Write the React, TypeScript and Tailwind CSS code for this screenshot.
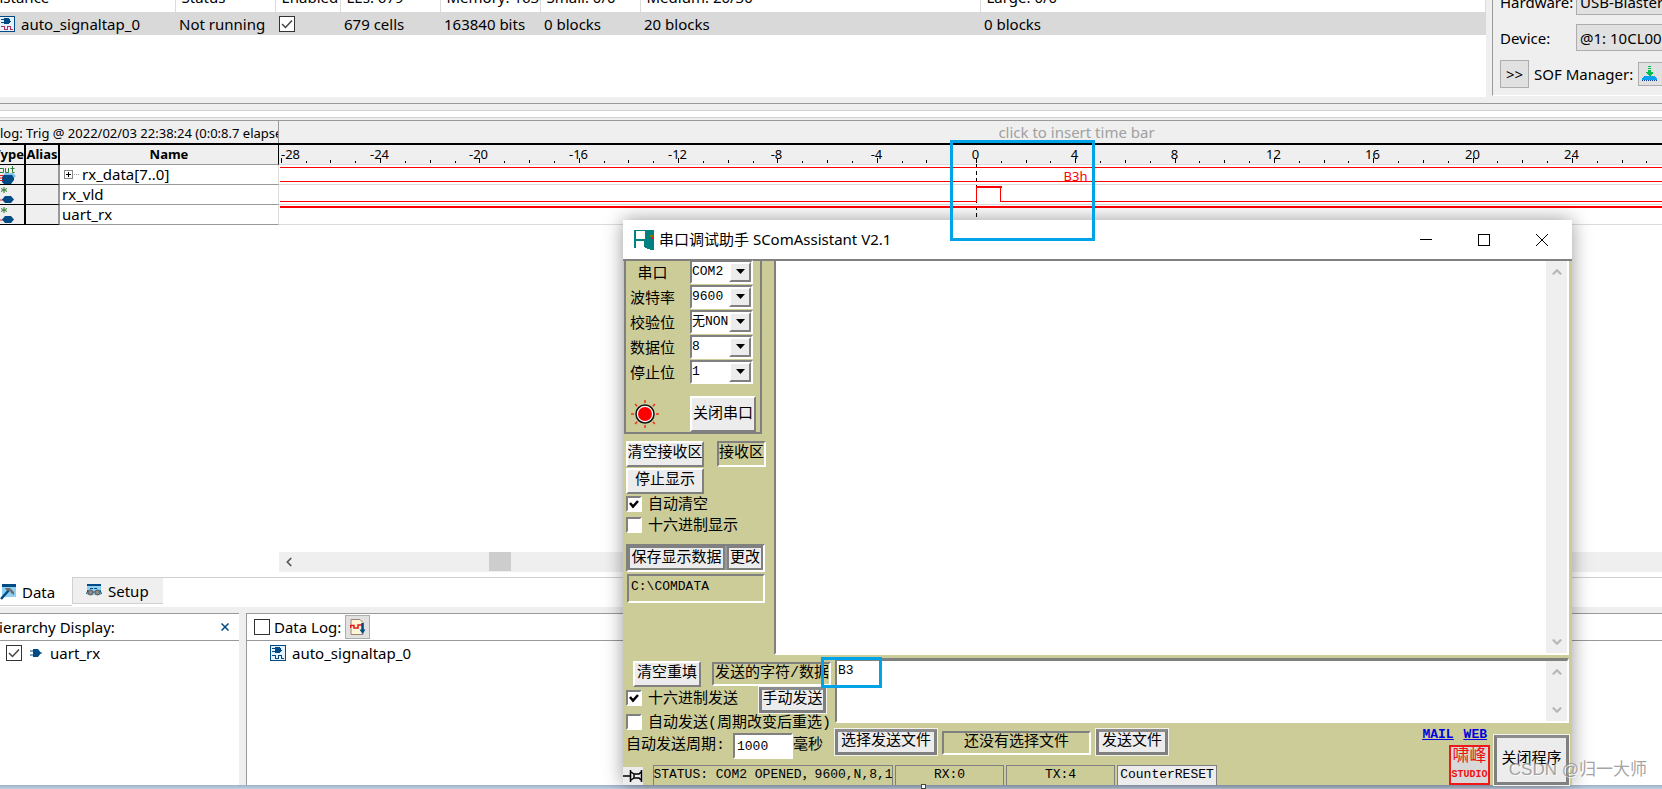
import type { ReactNode } from "react";
import { ChevronDown, ChevronLeft, ChevronUp } from "lucide-react";

const UI_FONT = "font-['Noto_Sans','Noto_Sans_CJK_SC',sans-serif]";
const SONG_FONT = "font-['Liberation_Mono','Noto_Sans_CJK_SC',monospace]";

const RAISED =
  "border-2 border-t-white border-l-white border-r-[#808080] border-b-[#808080] bg-[#ececec]";
const SUNKEN =
  "border-2 border-t-[#808080] border-l-[#808080] border-r-white border-b-white";
const FRAMED =
  "border-[3px] border-[#808080] border-t-[#8c8c8c] bg-[#ececec] outline outline-1 outline-[#f4f4ec]";

function SignalTapIcon({ wave = "#004a86" }: { wave?: string }) {
  return (
    <svg className="size-4 shrink-0" viewBox="0 0 16 16" shapeRendering="crispEdges" aria-hidden="true">
      <rect x="0.5" y="0.5" width="15" height="15" fill="#e6f1fa" stroke="#004a86" />
      <path d="M5 2h4l2 2v2l-2 2H5z" fill="#004a86" />
      <path d="M2 3.500h3M2 6.500h3M10 5h2" stroke="#004a86" />
      <path d="M2 10.500h3v3h3v-3h3v3h3" fill="none" stroke={wave} />
    </svg>
  );
}

function BusIcon() {
  return (
    <svg className="block h-[18px] w-4" viewBox="0 0 16 18" aria-hidden="true">
      <g fill="none" stroke="#2f7d32" strokeWidth="1">
        <path d="M0 2.500h3.500v4H0M5.500 2v4.500h3V2M12.500 0v6.500h2M10.500 2.500h4" />
      </g>
      <path d="M3 9l2-2h8l3 3-3 3z" fill="#7cc4ee" />
      <path d="M2 11l2-2h8l2 3v2l-3 4H4l-2-2z" fill="#004a86" />
      <path d="M0 9.500h4M0 12h3M0 14.500h3" stroke="#e02020" />
    </svg>
  );
}

function PinIcon() {
  return (
    <svg className="block h-[18px] w-4" viewBox="0 0 16 18" aria-hidden="true">
      <path d="M4 1v6M1 2.500l6 3M7 2.500L1 5.500" stroke="#2f7d32" strokeWidth="1" />
      <path d="M0 14h3" stroke="#e02020" />
      <path d="M5 10h6l3 3.500-3 3.500H5l-3-3.500z" fill="#004a86" />
    </svg>
  );
}

function HammerIcon() {
  return (
    <svg className="h-4 w-4" viewBox="0 0 16 16" aria-hidden="true">
      <rect x="2" y="1" width="14" height="12" fill="#8ecff2" />
      <rect x="2" y="0" width="14" height="3" fill="#004a86" />
      <path d="M1 15L9 6" stroke="#004a86" strokeWidth="2.500" />
      <path d="M5 4h5l4 4v3l-3-2-1-2-4-1z" fill="#6e6e6e" />
    </svg>
  );
}

function BinocularsIcon() {
  return (
    <svg className="h-4 w-4" viewBox="0 0 16 16" aria-hidden="true">
      <rect x="1" y="1" width="14" height="11" fill="#8ecff2" />
      <rect x="1" y="1" width="14" height="2" fill="#004a86" />
      <path d="M4 5.500h3M8 5.500h3" stroke="#004a86" />
      <path d="M0.500 11l1.500-4M15.500 11L14 7" stroke="#004a86" />
      <circle cx="4.500" cy="9.500" r="2.500" fill="#8a8a8a" stroke="#555" />
      <circle cx="11.500" cy="9.500" r="2.500" fill="#8a8a8a" stroke="#555" />
      <path d="M7 9h2" stroke="#555" />
    </svg>
  );
}

function DataLogIcon() {
  return (
    <svg className="h-[18px] w-4" viewBox="0 0 16 18" aria-hidden="true">
      <path d="M1 1.500h9l3 3v12H1z" fill="#fdf6d8" stroke="#9c8270" />
      <path d="M0.500 10V7.500H4V10h4V7h4" fill="none" stroke="#e81818" strokeWidth="1.500" />
      <path d="M12.500 5v8" stroke="#004a86" strokeWidth="2.500" />
      <path d="M9.500 11.500h6L12.500 16z" fill="#004a86" />
    </svg>
  );
}

function DownloadIcon() {
  return (
    <svg className="h-4 w-4" viewBox="0 0 16 16" shapeRendering="crispEdges" aria-hidden="true">
      <path d="M6 0h3v1H6zM6 2h3v1H6zM6 4h3v2h2v1L8 10 4 7V6h2z" fill="#00c050" />
      <path d="M3 10h9l3 2v2H0v-2z" fill="#0aa0f0" />
      <path d="M0 14.500h15" stroke="#123a8c" strokeWidth="1" strokeDasharray="1 1" />
    </svg>
  );
}

function ComAppIcon() {
  return (
    <svg className="h-5 w-5" viewBox="0 0 20 20" shapeRendering="crispEdges" aria-hidden="true">
      <path d="M0 0h20v20h-3l-7-3v-6H2v7H0z" fill="#008080" />
      <path d="M2 1h9v8H2z" fill="#fff" />
      <rect x="16" y="5" width="3" height="2" fill="#808000" />
      <rect x="17" y="7" width="2" height="2" fill="#e81010" />
    </svg>
  );
}

function LampIcon() {
  const rays = [0, 45, 90, 135, 180, 225, 270, 315];
  return (
    <svg className="h-[30px] w-[30px]" viewBox="0 0 30 30" role="img" aria-label="端口已打开">
      {rays.map((angle) => (
        <path key={angle} d="M15 1v3" stroke="#f03020" strokeWidth="1.500" transform={`rotate(${angle} 15 15)`} />
      ))}
      <circle cx="15" cy="15" r="9" fill="#fff" stroke="#111" strokeWidth="1.500" />
      <circle cx="15" cy="15" r="7" fill="#f00" />
    </svg>
  );
}

/* ---------- logic analyser ---------- */

const columns = [
  { head: "Instance", cell: "auto_signaltap_0", width: "w-[192px]" },
  { head: "Status", cell: "Not running", width: "w-[100px]" },
  { head: "Enabled", cell: "", width: "w-[65px]" },
  { head: "LEs: 679", cell: "679 cells", width: "w-[100px]" },
  { head: "Memory: 163840", cell: "163840 bits", width: "w-[100px]" },
  { head: "Small: 0/0", cell: "0 blocks", width: "w-[100px]" },
  { head: "Medium: 20/30", cell: "20 blocks", width: "w-[340px]" },
  { head: "Large: 0/0", cell: "0 blocks", width: "w-auto" },
];

function InstanceTable() {
  return (
    <div className="min-w-0 flex-1 overflow-hidden bg-white">
      <div className="-ml-[17px]">
        <table className="-mt-3 w-full table-fixed border-collapse text-[15px] leading-5">
          <thead>
            <tr className="h-6">
              {columns.map((c) => (
                <th
                  key={c.head}
                  className={`${c.width} overflow-hidden border-r border-[#dcdcdc] p-0 pb-[6px] pl-[6px] text-left align-bottom leading-[18px] font-normal whitespace-nowrap`}
                >
                  {c.head}
                </th>
              ))}
            </tr>
          </thead>
          <tbody>
            <tr className="h-[23px] bg-[#d9d9d9]">
              {columns.map((c, i) => (
                <td key={c.head} className="p-0 pl-1 whitespace-nowrap">
                  {i === 0 && (
                    <span className="flex items-center gap-[6px] pl-3">
                      <SignalTapIcon wave="#b03060" />
                      {c.cell}
                    </span>
                  )}
                  {i === 2 && <Tick label="Enabled" checked />}
                  {i !== 0 && i !== 2 && c.cell}
                </td>
              ))}
            </tr>
          </tbody>
        </table>
      </div>
    </div>
  );
}

function Tick({ label, checked = false }: { label: string; checked?: boolean }) {
  return (
    <span className="grid size-4 place-items-center">
      <input
        type="checkbox"
        aria-label={label}
        defaultChecked={checked}
        className="peer col-start-1 row-start-1 size-4 appearance-none border border-[#333] bg-white"
      />
      <svg
        className="pointer-events-none col-start-1 row-start-1 hidden size-3 peer-checked:block"
        viewBox="0 0 12 12"
        aria-hidden="true"
      >
        <path d="M1 6l3.500 3.500L11 2.500" fill="none" stroke="#444" strokeWidth="1.500" />
      </svg>
    </span>
  );
}

function HardwarePanel() {
  const box = "border border-[#adadad] bg-[#e1e1e1]";
  return (
    <div className="flex h-[97px] w-[176px] shrink-0 overflow-hidden bg-[#efefef] pl-[6px] text-[15px] leading-5">
      <div className="mb-px w-full border-b border-l border-b-white border-l-[#999] pl-[7px]">
        <div className="-mt-3 grid grid-cols-[76px_120px] items-center gap-y-[9px]">
          <label htmlFor="hardware">Hardware:</label>
          <select id="hardware" className={`${box} h-[27px] appearance-none px-[3px]`}>
            <option>USB-Blaster [USB-0]</option>
          </select>
          <label htmlFor="device">Device:</label>
          <select id="device" className={`${box} h-[27px] appearance-none px-[3px]`}>
            <option>@1: 10CL006Y</option>
          </select>
        </div>
        <div className="mt-[9px] flex items-center gap-[5px] whitespace-nowrap">
          <button type="button" className={`${box} h-7 w-[29px] shrink-0`}>
            &gt;&gt;
          </button>
          <span>SOF Manager:</span>
          <button type="button" aria-label="Program device" className={`${box} h-6 w-10 shrink-0 pl-[3px]`}>
            <DownloadIcon />
          </button>
        </div>
      </div>
    </div>
  );
}

const ORIGIN = 697;
const STEP = 24.83;
const xAt = (t: number) => Math.round(ORIGIN + t * STEP) + 0.5;

function Waveform() {
  const ticks = Array.from({ length: 58 }, (_, i) => i - 28);
  const pulse = `M1 56.500H${xAt(0)}V41.500H${xAt(1) - 1}V56.500H1600`;
  return (
    <div className="min-w-0 flex-1 overflow-hidden">
      <svg className="block h-20 w-full" shapeRendering="crispEdges" role="img" aria-label="Captured waveform">
        <rect width="100%" height="19" fill="#efefef" />
        {[19, 39, 59, 79].map((y) => (
          <rect key={y} y={y} width="100%" height="1" fill="#dcdcdc" />
        ))}
        {ticks.map((t) => (
          <path
            key={t}
            d={`M${xAt(t)} ${t % 4 === 0 ? 13 : t % 2 === 0 ? 15 : 16}V18`}
            stroke="#000"
          />
        ))}
        <g fontSize="13" fontFamily="Noto Sans, sans-serif">
          {ticks
            .filter((t) => t % 4 === 0)
            .map((t) => (
              <text key={t} x={t === -28 ? 2 : xAt(t) - 1} y="14" textAnchor={t === -28 ? "start" : "middle"}>
                {t}
              </text>
            ))}
          <text x={xAt(4) + 12} y="36" textAnchor="end" fill="#f00">
            B3h
          </text>
        </g>
        <path d={`M${xAt(0)} 19V76`} stroke="#000" strokeDasharray="4 3" />
        <g fill="none" stroke="#f00">
          <path d="M1 22.500H1600M1 36.500H1600" />
          <path d={pulse} />
          <path d={`M${xAt(0)} 42H${xAt(1)}`} strokeWidth="2" />
          <path d="M1 62H1600" strokeWidth="2" />
        </g>
      </svg>
    </div>
  );
}

const signals = [
  { name: "rx_data[7..0]", bus: true },
  { name: "rx_vld", bus: false },
  { name: "uart_rx", bus: false },
];

function SignalTable() {
  return (
    <table className="w-[279px] shrink-0 table-fixed border-separate border-spacing-0 text-[15px] leading-[19px]">
      <thead>
        <tr className="h-5 bg-[#efefef] text-[13px]">
          <th className="w-[26px] overflow-hidden border-r-2 border-b border-black p-0">
            <span className="-ml-3 block text-right">Type</span>
          </th>
          <th className="w-[34px] border-r-2 border-b border-black p-0">Alias</th>
          <th className="border-r border-b border-r-black border-b-[#999] p-0">Name</th>
        </tr>
      </thead>
      <tbody>
        {signals.map((s) => (
          <tr key={s.name} className="h-5">
            <td className="border-r-2 border-b border-black bg-[#efefef] p-0">
              {s.bus ? <BusIcon /> : <PinIcon />}
            </td>
            <td className="border-r-2 border-b border-r-[#999] border-b-black bg-[#efefef] p-0" />
            <td className="border-r border-b border-r-[#dcdcdc] border-b-[#999] p-0 pl-[2px]">
              <span className="flex items-center whitespace-nowrap">
                {s.bus && (
                  <svg className="mr-[3px] ml-[2px] h-[9px] w-[15px]" viewBox="0 0 15 9" shapeRendering="crispEdges" aria-hidden="true">
                    <rect x="0.500" y="0.500" width="8" height="8" fill="#fff" stroke="#888" />
                    <path d="M2 4.500h5M4.500 2v5" stroke="#000" />
                    <path d="M10 4.500h5" stroke="#999" strokeDasharray="1 1" />
                  </svg>
                )}
                {s.name}
              </span>
            </td>
          </tr>
        ))}
      </tbody>
    </table>
  );
}

function BottomPanels() {
  return (
    <>
      <div className="mt-[5px] flex h-[30px] items-start bg-white text-[15px] leading-5">
        <button type="button" className="flex h-[29px] w-[72px] items-center gap-[6px] border-b border-[#d0d0d0] pt-[2px]">
          <HammerIcon />
          Data
        </button>
        <div className="flex-1 border-t border-l border-[#d0d0d0]">
          <button type="button" className="flex h-[26px] w-[90px] items-center gap-[6px] border-b border-[#d0d0d0] bg-[#efefef] pl-[13px]">
            <BinocularsIcon />
            Setup
          </button>
        </div>
      </div>
      <div className="flex h-[178px] gap-[7px] bg-[#efefef] pt-[6px] text-[15px] leading-5">
        <section className="w-[239px] shrink-0 border-t border-[#999] bg-white">
          <div className="flex h-[27px] items-center justify-between border-b border-[#999] pr-[10px]">
            <span className="-ml-3">Hierarchy Display:</span>
            <button type="button" aria-label="Close hierarchy" className="p-0">
              <svg className="h-2 w-2" viewBox="0 0 8 8" aria-hidden="true">
                <path d="M0.500 0.500l7 7M7.500 0.500l-7 7" stroke="#004a86" strokeWidth="1.500" />
              </svg>
            </button>
          </div>
          <div className="flex h-6 items-center pl-[6px]">
            <Tick label="uart_rx" checked />
            <svg className="mr-2 ml-2 h-2 w-3" viewBox="0 0 12 8" aria-hidden="true">
              <path d="M3 0h5l3 4-3 4H3z" fill="#004a86" />
              <path d="M0 2h4M0 6h4M10 4h2" stroke="#004a86" />
            </svg>
            uart_rx
          </div>
        </section>
        <section className="flex-1 border-t border-l border-[#999] bg-white">
          <div className="flex h-[27px] items-center gap-1 border-b border-[#999] pl-[7px]">
            <Tick label="Data Log" />
            <span>Data Log:</span>
            <button type="button" aria-label="Save log" className="grid h-6 w-[25px] place-items-center border border-[#adadad] bg-[#e1e1e1]">
              <DataLogIcon />
            </button>
          </div>
          <div className="flex h-6 items-center gap-[6px] pl-[23px]">
            <SignalTapIcon />
            auto_signaltap_0
          </div>
        </section>
      </div>
      <div className="h-1 bg-linear-to-b from-[#9fb0c8] to-[#c3d0e0]" />
    </>
  );
}

/* ---------- serial assistant ---------- */

const ports = [
  { id: "port", label: "串口", value: "COM2" },
  { id: "baud", label: "波特率", value: "9600" },
  { id: "parity", label: "校验位", value: "无NONE" },
  { id: "data", label: "数据位", value: "8" },
  { id: "stop", label: "停止位", value: "1" },
];

function Check({ label, checked = false }: { label: string; checked?: boolean }) {
  return (
    <label className="flex items-start gap-[6px] whitespace-nowrap">
      <span className="grid size-4 place-items-center">
        <input
          type="checkbox"
          defaultChecked={checked}
          className="peer col-start-1 row-start-1 size-4 appearance-none border-2 border-t-[#808080] border-r-white border-b-white border-l-[#808080] bg-white"
        />
        <svg
          className="pointer-events-none col-start-1 row-start-1 hidden size-[10px] peer-checked:block"
          viewBox="0 0 10 10"
          aria-hidden="true"
        >
          <path d="M1 4l3 3.500L9 2" fill="none" stroke="#000" strokeWidth="2.500" />
        </svg>
      </span>
      {label}
    </label>
  );
}

function ScrollRail() {
  return (
    <div className="flex w-[21px] shrink-0 flex-col items-center justify-between bg-[#efefef] py-1 text-[#b8b8b8]" aria-hidden="true">
      <ChevronUp className="size-[14px]" strokeWidth={4} />
      <ChevronDown className="size-[14px]" strokeWidth={4} />
    </div>
  );
}

function Readout({ className, children }: { className: string; children: ReactNode }) {
  return (
    <div className={`${SUNKEN} overflow-hidden whitespace-nowrap ${className}`}>{children}</div>
  );
}

function PortSettings() {
  return (
    <div className="ml-px h-[175px] w-[138px] border-r-2 border-b-2 border-l-2 border-[#808080]">
      {ports.map((p) => (
        <div key={p.id} className="flex h-[25px] items-center justify-between pr-[7px] pl-1">
          <label htmlFor={p.id} className="w-[45px] pt-[6px] text-center">
            {p.label}
          </label>
          <div className={`${SUNKEN} flex h-6 w-[63px] bg-white`}>
            <select id={p.id} className="w-[37px] appearance-none overflow-hidden text-clip bg-white text-[13px] leading-4">
              <option>{p.value}</option>
            </select>
            <span className={`${RAISED} pointer-events-none grid flex-1 place-items-center`}>
              <svg className="h-[5px] w-[9px]" viewBox="0 0 9 5" aria-hidden="true">
                <path d="M0 0h9L4.500 5z" />
              </svg>
            </span>
          </div>
        </div>
      ))}
      <div className="mt-3 flex items-center justify-between pr-1 pl-1">
        <LampIcon />
        <button type="button" className={`${RAISED} h-9 w-[66px] pt-[2px] whitespace-nowrap`}>
          关闭串口
        </button>
      </div>
    </div>
  );
}

function ReceiveControls() {
  return (
    <div className="w-[151px] shrink-0">
      <PortSettings />
      <div className="mt-[7px] flex justify-between pr-2 pl-[3px]">
        <button type="button" className={`${RAISED} flex h-[26px] w-[78px] items-center justify-center overflow-hidden whitespace-nowrap`}>
          清空接收区
        </button>
        <Readout className="flex h-[26px] w-[49px] items-center">接收区</Readout>
      </div>
      <button type="button" className={`${RAISED} mt-px ml-[3px] block h-[26px] w-[78px]`}>
        停止显示
      </button>
      <div className="mt-[2px] flex flex-col gap-px pl-[3px]">
        <Check label="自动清空" checked />
        <Check label="十六进制显示" />
      </div>
      <div className={`${SUNKEN} mt-[7px] ml-[3px] flex h-7 w-[139px] gap-[2px] bg-[#9a9a9a] whitespace-nowrap`}>
        <button type="button" className="flex-1 border-2 border-[#808080] bg-[#ececec] pt-px">
          保存显示数据
        </button>
        <button type="button" className="w-9 border-2 border-[#808080] bg-[#ececec] pt-px">
          更改
        </button>
      </div>
      <Readout className="mt-[2px] ml-1 h-[29px] w-[138px] px-[2px] pt-px text-[13px]">
        C:\COMDATA
      </Readout>
    </div>
  );
}

function SendArea() {
  const status = "flex h-5 items-center justify-center border border-[#808080] border-b-0 text-[13px] whitespace-nowrap";
  return (
    <div className="grid grid-cols-[212px_1fr_auto]">
      <div className="row-span-2 pt-[6px]">
        <div className="flex items-center justify-between pr-1 pl-[10px]">
          <button type="button" className={`${RAISED} h-[26px] w-[68px] whitespace-nowrap`}>
            清空重填
          </button>
          <Readout className="h-6 w-[119px] px-px">
            <label htmlFor="send">发送的字符/数据</label>
          </Readout>
        </div>
        <div className="flex items-center justify-between pr-[9px] pl-[3px]">
          <Check label="十六进制发送" checked />
          <button type="button" className={`${FRAMED} h-[26px] w-[67px] leading-[18px] whitespace-nowrap`}>
            手动发送
          </button>
        </div>
        <div className="pt-px pl-[3px]">
          <Check label="自动发送(周期改变后重选)" />
        </div>
        <div className="flex h-6 items-center pl-[3px] whitespace-nowrap">
          <label htmlFor="period" className="w-[107px]">
            自动发送周期:
          </label>
          <input
            id="period"
            defaultValue="1000"
            className={`${SUNKEN} h-[26px] w-[60px] bg-white px-[2px] text-[13px]`}
          />
          毫秒
        </div>
      </div>

      <div className="col-span-2 mt-[3px] mr-[3px] flex h-[65px] border-2 border-t-[3px] border-t-[#808080] border-r-white border-b-white border-l-[#808080] bg-white">
        <textarea
          id="send"
          defaultValue="B3"
          className="min-w-0 flex-1 resize-none overflow-hidden bg-white px-px pt-[2px] text-[13px] leading-4 outline-none"
        />
        <ScrollRail />
      </div>

      <div className="flex items-start gap-[5px] pt-[2px] whitespace-nowrap">
        <button type="button" className={`${FRAMED} h-[26px] w-[102px] leading-5`}>
          选择发送文件
        </button>
        <Readout className="mt-[2px] h-6 w-[149px] text-center leading-5">还没有选择文件</Readout>
        <button type="button" className={`${FRAMED} h-[26px] w-[72px] leading-5`}>
          发送文件
        </button>
      </div>

      <div className="row-span-2 flex items-end gap-[2px]">
        <div className="flex flex-col items-end">
          <div className="mr-[3px] flex gap-[10px] text-[13px] leading-4 font-bold text-[#0000e0] underline">
            <a href="#mail">MAIL</a>
            <a href="#web">WEB</a>
          </div>
          <div className="mt-[2px] flex h-10 w-[41px] flex-col items-center overflow-hidden border-2 border-[#f01818] bg-[#d8d8d8] text-[17px] leading-[19px] whitespace-nowrap text-[#f01010]">
            啸峰
            <span className="text-[10px] leading-[18px] font-bold">STUDIO</span>
          </div>
        </div>
        <button type="button" className={`${FRAMED} mr-[3px] ml-[2px] h-[50px] w-[75px] whitespace-nowrap`}>
          关闭程序
        </button>
      </div>

      <div className="col-span-2 flex items-end gap-[2px]">
        <svg className="mr-2 h-[18px] w-5 bg-[#ececec]" viewBox="0 0 20 18" aria-hidden="true">
          <path d="M0 9h7M7.500 3v12M18.500 3v12M8 5l3 2h5l2-2M8 13l3-2h5l2 2M11 7v4" fill="none" stroke="#000" strokeWidth="1.500" />
        </svg>
        <div className={`${status} w-[240px]`}>STATUS: COM2 OPENED，9600,N,8,1</div>
        <div className={`${status} w-[109px]`}>RX:0</div>
        <div className={`${status} w-[109px]`}>TX:4</div>
        <button type="button" className={`${status} w-[100px] bg-[#ececec]`}>
          CounterRESET
        </button>
      </div>
    </div>
  );
}

function SerialWindow() {
  return (
    <div className="absolute top-[220px] right-[90px] left-[623px] bg-[#cccc99] shadow-[0_0_18px_rgba(0,0,0,0.4)]">
      <header className="flex h-[39px] items-center bg-white pr-6 pl-[11px]">
        <ComAppIcon />
        <h1 className="ml-[5px] flex-1 text-[15px]">串口调试助手 SComAssistant V2.1</h1>
        <div className="flex gap-[46px]">
          <button type="button" aria-label="最小化">
            <svg className="size-3" viewBox="0 0 12 12" shapeRendering="crispEdges">
              <path d="M0 5.500h12" stroke="#000" />
            </svg>
          </button>
          <button type="button" aria-label="最大化">
            <svg className="size-3" viewBox="0 0 12 12" shapeRendering="crispEdges">
              <rect x="0.500" y="0.500" width="11" height="11" fill="none" stroke="#000" />
            </svg>
          </button>
          <button type="button" aria-label="关闭">
            <svg className="size-3" viewBox="0 0 12 12">
              <path d="M0 0l12 12M12 0L0 12" stroke="#000" />
            </svg>
          </button>
        </div>
      </header>
      <div className={`${SONG_FONT} border-t-2 border-[#808080] text-[15px] leading-[20px]`}>
        <div className="-mt-[2px] flex">
          <ReceiveControls />
          <div className="mt-[2px] mr-[3px] flex h-[394px] flex-1 border-2 border-t-0 border-r-white border-b-white border-l-[#808080] bg-white">
            <textarea
              readOnly
              aria-label="接收区"
              className="min-w-0 flex-1 resize-none overflow-hidden bg-white outline-none"
            />
            <ScrollRail />
          </div>
        </div>
        <SendArea />
      </div>
    </div>
  );
}

export default function App() {
  return (
    <div className={`${UI_FONT} relative flex min-h-screen flex-col overflow-hidden bg-white text-black`}>
      <div className="flex h-[97px] overflow-hidden">
        <InstanceTable />
        <HardwarePanel />
      </div>
      <div className="h-[14px] bg-[#efefef] pt-[6px]">
        <div className="h-2 border-t border-b border-t-[#999] border-b-[#d0d0d0]" />
      </div>
      <div className="mt-[6px] h-[3px] border-t border-[#d0d0d0] bg-[#efefef]" />
      <div className="flex h-[25px] border-t border-b-2 border-t-[#999] border-b-black bg-[#efefef] leading-[25px]">
        <div className="w-[279px] shrink-0 overflow-hidden border-r border-[#999] text-[13px] whitespace-nowrap">
          log: Trig @ 2022/02/03 22:38:24 (0:0:8.7 elapsed)
        </div>
        <div className="flex-1 pl-[212px] text-center text-[15px] leading-[23px] text-[#a0a0a0]">click to insert time bar</div>
      </div>
      <div className="flex items-start">
        <SignalTable />
        <Waveform />
      </div>
      <div className="flex-1" />
      <div className="ml-[279px] flex h-5 shrink-0 bg-[#efefef]">
        <ChevronLeft className="mt-[3px] ml-[3px] size-[14px] text-[#555]" strokeWidth={3} />
        <div className="ml-[193px] h-[19px] w-[22px] bg-[#cdcdcd]" />
      </div>
      <BottomPanels />

      <SerialWindow />

      <div className="pointer-events-none absolute top-[140px] left-[950px] h-[101px] w-[145px] border-[3px] border-[#00a2e8]" />
      <div className="pointer-events-none absolute top-[657px] left-[821px] h-[31px] w-[61px] border-[3px] border-[#00a2e8]" />
      <div className="absolute bottom-0 left-[921px] size-[5px] border border-[#444] bg-white" />
      <div className="absolute right-[15px] bottom-[8px] font-['Liberation_Sans','Noto_Sans_CJK_SC',sans-serif] text-[17px] leading-[22px] text-[#8c8c8c]/80 [text-shadow:1px_1px_0_rgba(255,255,255,0.7)]">
        CSDN @归一大师
      </div>
    </div>
  );
}
